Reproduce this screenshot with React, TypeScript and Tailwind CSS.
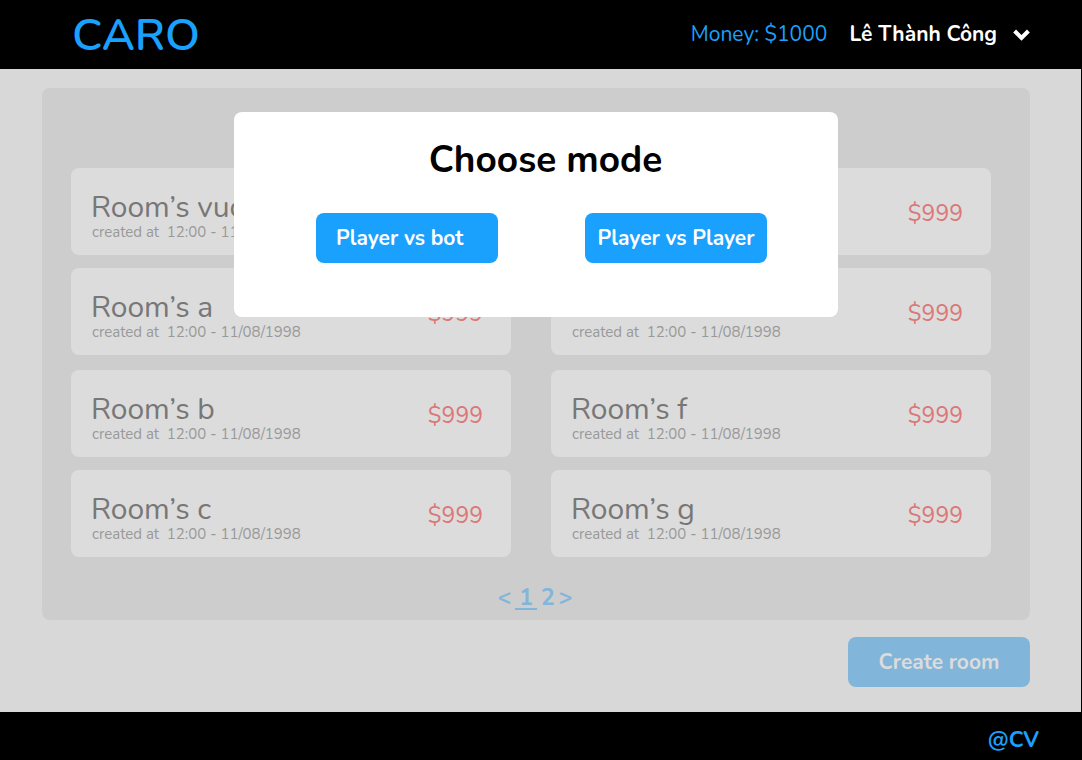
import { ReactNode } from "react";

type Room = { name: string; price: string };

const roomGroups: Room[][] = [
  [
    { name: "vuong", price: "$999" },
    { name: "d", price: "$999" },
    { name: "a", price: "$999" },
    { name: "e", price: "$999" },
  ],
  [
    { name: "b", price: "$999" },
    { name: "f", price: "$999" },
    { name: "c", price: "$999" },
    { name: "g", price: "$999" },
  ],
];

function RoomCard({ name, price }: Room) {
  return (
    <li className="flex h-[87px] items-center justify-between rounded-lg bg-[#dcdcdc] pt-1 pr-7 pl-5">
      <div className="pt-1">
        <h3 className="text-[30px] leading-8 text-[#777777]">Room’s {name}</h3>
        <p className="pl-px text-[15px] leading-4 whitespace-pre text-[#999999]">created at  12:00 - 11/08/1998</p>
      </div>
      <span className="text-[23px] leading-8 text-[#dc7777]">{price}</span>
    </li>
  );
}

function ModeButton({ align, children }: { align: "start" | "center"; children: ReactNode }) {
  return (
    <button
      type="button"
      className={`h-[50px] w-[182px] rounded-lg bg-[#1aa0fd] pt-0.5 text-[21px] font-bold whitespace-nowrap text-white ${
        align === "start" ? "pl-5 text-left" : "text-center"
      }`}
    >
      {children}
    </button>
  );
}

function ModeDialog() {
  return (
    <div
      role="dialog"
      aria-labelledby="mode-title"
      className="absolute inset-x-48 top-6 flex h-[205px] flex-col rounded-lg bg-white pt-6 pr-[71px] pl-[82px]"
    >
      <h2 id="mode-title" className="pl-2 text-center text-[37px] leading-[48px] font-bold text-black">
        Choose mode
      </h2>
      <div className="mt-[29px] flex justify-between">
        <ModeButton align="start">Player vs bot</ModeButton>
        <ModeButton align="center">Player vs Player</ModeButton>
      </div>
    </div>
  );
}

export default function App() {
  return (
    <div className="flex min-h-screen flex-col bg-black pr-px font-['Nunito','Lato',sans-serif]">
      <header className="flex h-[69px] items-center justify-between pr-[51px] pl-[72px]">
        <h1 className="pt-0.5 text-[45px] font-semibold text-[#1aa0fd]">CARO</h1>
        <div className="flex items-center gap-[22px] text-[21px]">
          <span className="text-[#1aa0fd]">Money: $1000</span>
          <button type="button" className="flex items-center gap-4 font-bold text-white">
            Lê Thành Công
            <svg width="17" height="12" viewBox="0 0 17 12" fill="none" stroke="currentColor" strokeWidth="4" aria-hidden="true">
              <path d="M1.6 2 8.5 9l6.9-7" />
            </svg>
          </button>
        </div>
      </header>

      <main className="flex flex-1 flex-col bg-[#d8d8d8] pt-[19px] pr-[51px] pb-[25px] pl-[42px]">
        <section className="relative rounded-lg bg-[#cdcdcd] pr-[39px] pb-2 pl-[29px]">
          <h2 className="h-20 pt-[18px] pl-5 text-center text-4xl leading-10 font-bold text-[#777777]">Room list</h2>
          <div className="flex flex-col gap-[15px]">
            {roomGroups.map((rooms, index) => (
              <ul key={index} className="grid grid-cols-2 gap-x-10 gap-y-[13px]">
                {rooms.map((room) => (
                  <RoomCard key={room.name} {...room} />
                ))}
              </ul>
            ))}
          </div>
          <nav
            aria-label="Pages"
            className="mt-6 flex h-[31px] items-start justify-center gap-1 pt-[3px] pl-2 text-[23px] leading-7 font-bold text-[#82b5da]"
          >
            <a href="#previous">&lt;</a>
            <a href="#1" className="h-[26px] border-b-2 px-1">1</a>
            <a href="#2">2</a>
            <a href="#next">&gt;</a>
          </nav>
          <ModeDialog />
        </section>
        <button type="button" className="mt-[17px] h-[50px] w-[182px] self-end rounded-lg bg-[#82b5da] pt-0.5 text-[21px] font-bold text-[#dcdcdc]">
          Create room
        </button>
      </main>

      <footer className="flex h-12 items-center justify-end pt-2 pr-[42px] text-[22px] font-bold text-[#1aa0fd]">
        @CV
      </footer>
    </div>
  );
}
